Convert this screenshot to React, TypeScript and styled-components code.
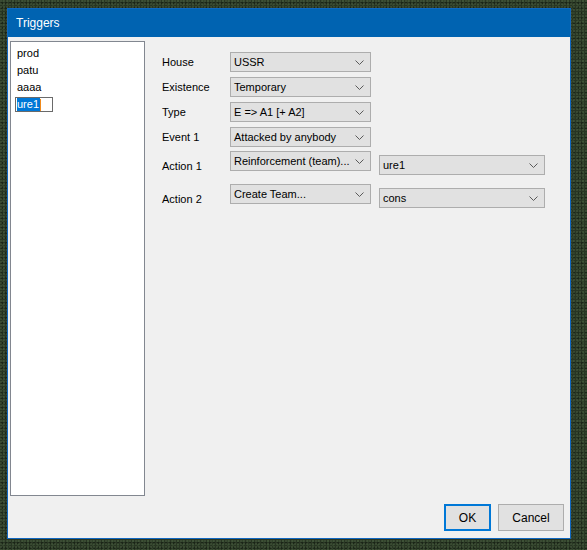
import React from "react";
import styled, { createGlobalStyle } from "styled-components";

const Global = createGlobalStyle`
  html, body { margin: 0; padding: 0; }
  body {
    width: 587px;
    height: 550px;
    overflow: hidden;
    background-color: #283523;
    background-image:
      radial-gradient(circle at 1px 1px, rgba(90,115,80,0.35) 0.7px, transparent 0.9px),
      radial-gradient(circle at 2px 3px, rgba(10,18,10,0.45) 0.8px, transparent 1px),
      radial-gradient(circle at 3px 1px, rgba(70,95,60,0.3) 0.7px, transparent 0.9px);
    background-size: 3px 3px, 4px 5px, 5px 4px;
    font-family: "Liberation Sans", Arial, sans-serif;
  }
`;

const Desktop = styled.div`
  padding: 8px 0 0 7px;
`;

const Window = styled.div`
  width: 562px;
  height: 529px;
  border: 1px solid #1067c0;
  background: #f0f0f0;
  display: flex;
  flex-direction: column;
`;

const TitleBar = styled.div`
  height: 28px;
  background: #0063b1;
  color: #fff;
  font-size: 12px;
  display: flex;
  align-items: center;
  padding-left: 8px;
  padding-bottom: 1px;
  box-sizing: border-box;
`;

const Client = styled.div`
  flex: 1;
  display: flex;
  flex-direction: column;
  padding: 4px 6px 7px 2px;
`;

const Top = styled.div`
  display: flex;
`;

const ListBox = styled.div`
  width: 133px;
  height: 450px;
  border: 1px solid #828790;
  background: #fff;
  padding-top: 3px;
  box-sizing: content-box;
`;

const ListItem = styled.div`
  height: 17px;
  line-height: 17px;
  font-size: 11px;
  color: #000;
  padding-left: 6px;
  white-space: nowrap;
`;

const EditBox = styled.span`
  display: inline-flex;
  align-items: center;
  height: 13px;
  width: 35px;
  margin-left: -2px;
  border: 1px solid #6a6a6a;
  background: #fff;
  padding-left: 1px;
  line-height: 13px;
`;

const Selected = styled.span`
  background: #0078d7;
  color: #fff;
  padding-right: 1px;
`;

const Caret = styled.span`
  display: inline-block;
  width: 1px;
  height: 12px;
  background: #f08a1c;
`;

const Form = styled.div`
  padding: 11px 0 0 17px;
  display: flex;
  flex-direction: column;
`;

const Row = styled.div<{ $mt?: number }>`
  display: flex;
  align-items: center;
  margin-top: ${(p) => p.$mt ?? 0}px;
`;

const ActionRow = styled.div<{ $mt: number }>`
  display: flex;
  align-items: flex-start;
  margin-top: ${(p) => p.$mt}px;
`;

const Label = styled.div<{ $pt?: number }>`
  width: 68px;
  font-size: 11px;
  color: #000;
  white-space: nowrap;
  padding-top: ${(p) => p.$pt ?? 0}px;
`;

const Combo = styled.div<{ $w: number; $mt?: number; $ml?: number }>`
  width: ${(p) => p.$w}px;
  height: 20px;
  box-sizing: border-box;
  border: 1px solid #adadad;
  background: #e1e1e1;
  display: flex;
  align-items: center;
  justify-content: space-between;
  padding: 0 6px 0 3px;
  font-size: 11px;
  color: #000;
  white-space: nowrap;
  flex-shrink: 0;
  margin-top: ${(p) => p.$mt ?? 0}px;
  margin-left: ${(p) => p.$ml ?? 0}px;
`;

const Chevron = () => (
  <svg width="9" height="5" viewBox="0 0 9 5">
    <path d="M0.5 0.5 L4.5 4.5 L8.5 0.5" fill="none" stroke="#5a5a5a" strokeWidth="1" />
  </svg>
);

const Buttons = styled.div`
  margin-top: auto;
  display: flex;
  justify-content: flex-end;
  gap: 7px;
`;

const Button = styled.button<{ $w: number; $default?: boolean }>`
  width: ${(p) => p.$w}px;
  height: 27px;
  box-sizing: border-box;
  background: #e1e1e1;
  border: ${(p) => (p.$default ? "2px solid #0078d7" : "1px solid #adadad")};
  font-family: "Liberation Sans", Arial, sans-serif;
  font-size: 12px;
  color: #000;
  padding: 0;
  margin: 0;
`;

const Select: React.FC<{ w: number; text: string; mt?: number; ml?: number }> = ({ w, text, mt, ml }) => (
  <Combo $w={w} $mt={mt} $ml={ml}>
    <span>{text}</span>
    <Chevron />
  </Combo>
);

export default function App() {
  return (
    <>
      <Global />
      <Desktop>
        <Window>
          <TitleBar>Triggers</TitleBar>
          <Client>
            <Top>
              <ListBox>
                <ListItem>prod</ListItem>
                <ListItem>patu</ListItem>
                <ListItem>aaaa</ListItem>
                <ListItem>
                  <EditBox>
                    <Selected>ure1</Selected>
                    <Caret />
                  </EditBox>
                </ListItem>
              </ListBox>
              <Form>
                <Row>
                  <Label>House</Label>
                  <Select w={141} text="USSR" />
                </Row>
                <Row $mt={5}>
                  <Label>Existence</Label>
                  <Select w={141} text="Temporary" />
                </Row>
                <Row $mt={5}>
                  <Label>Type</Label>
                  <Select w={141} text="E => A1 [+ A2]" />
                </Row>
                <Row $mt={5}>
                  <Label>Event 1</Label>
                  <Select w={141} text="Attacked by anybody" />
                </Row>
                <ActionRow $mt={4}>
                  <Label $pt={9}>Action 1</Label>
                  <Select w={141} text="Reinforcement (team)..." />
                  <Select w={166} text="ure1" mt={4} ml={8} />
                </ActionRow>
                <ActionRow $mt={9}>
                  <Label $pt={9}>Action 2</Label>
                  <Select w={141} text="Create Team..." />
                  <Select w={166} text="cons" mt={4} ml={8} />
                </ActionRow>
              </Form>
            </Top>
            <Buttons>
              <Button $w={47} $default>
                OK
              </Button>
              <Button $w={66}>Cancel</Button>
            </Buttons>
          </Client>
        </Window>
      </Desktop>
    </>
  );
}
